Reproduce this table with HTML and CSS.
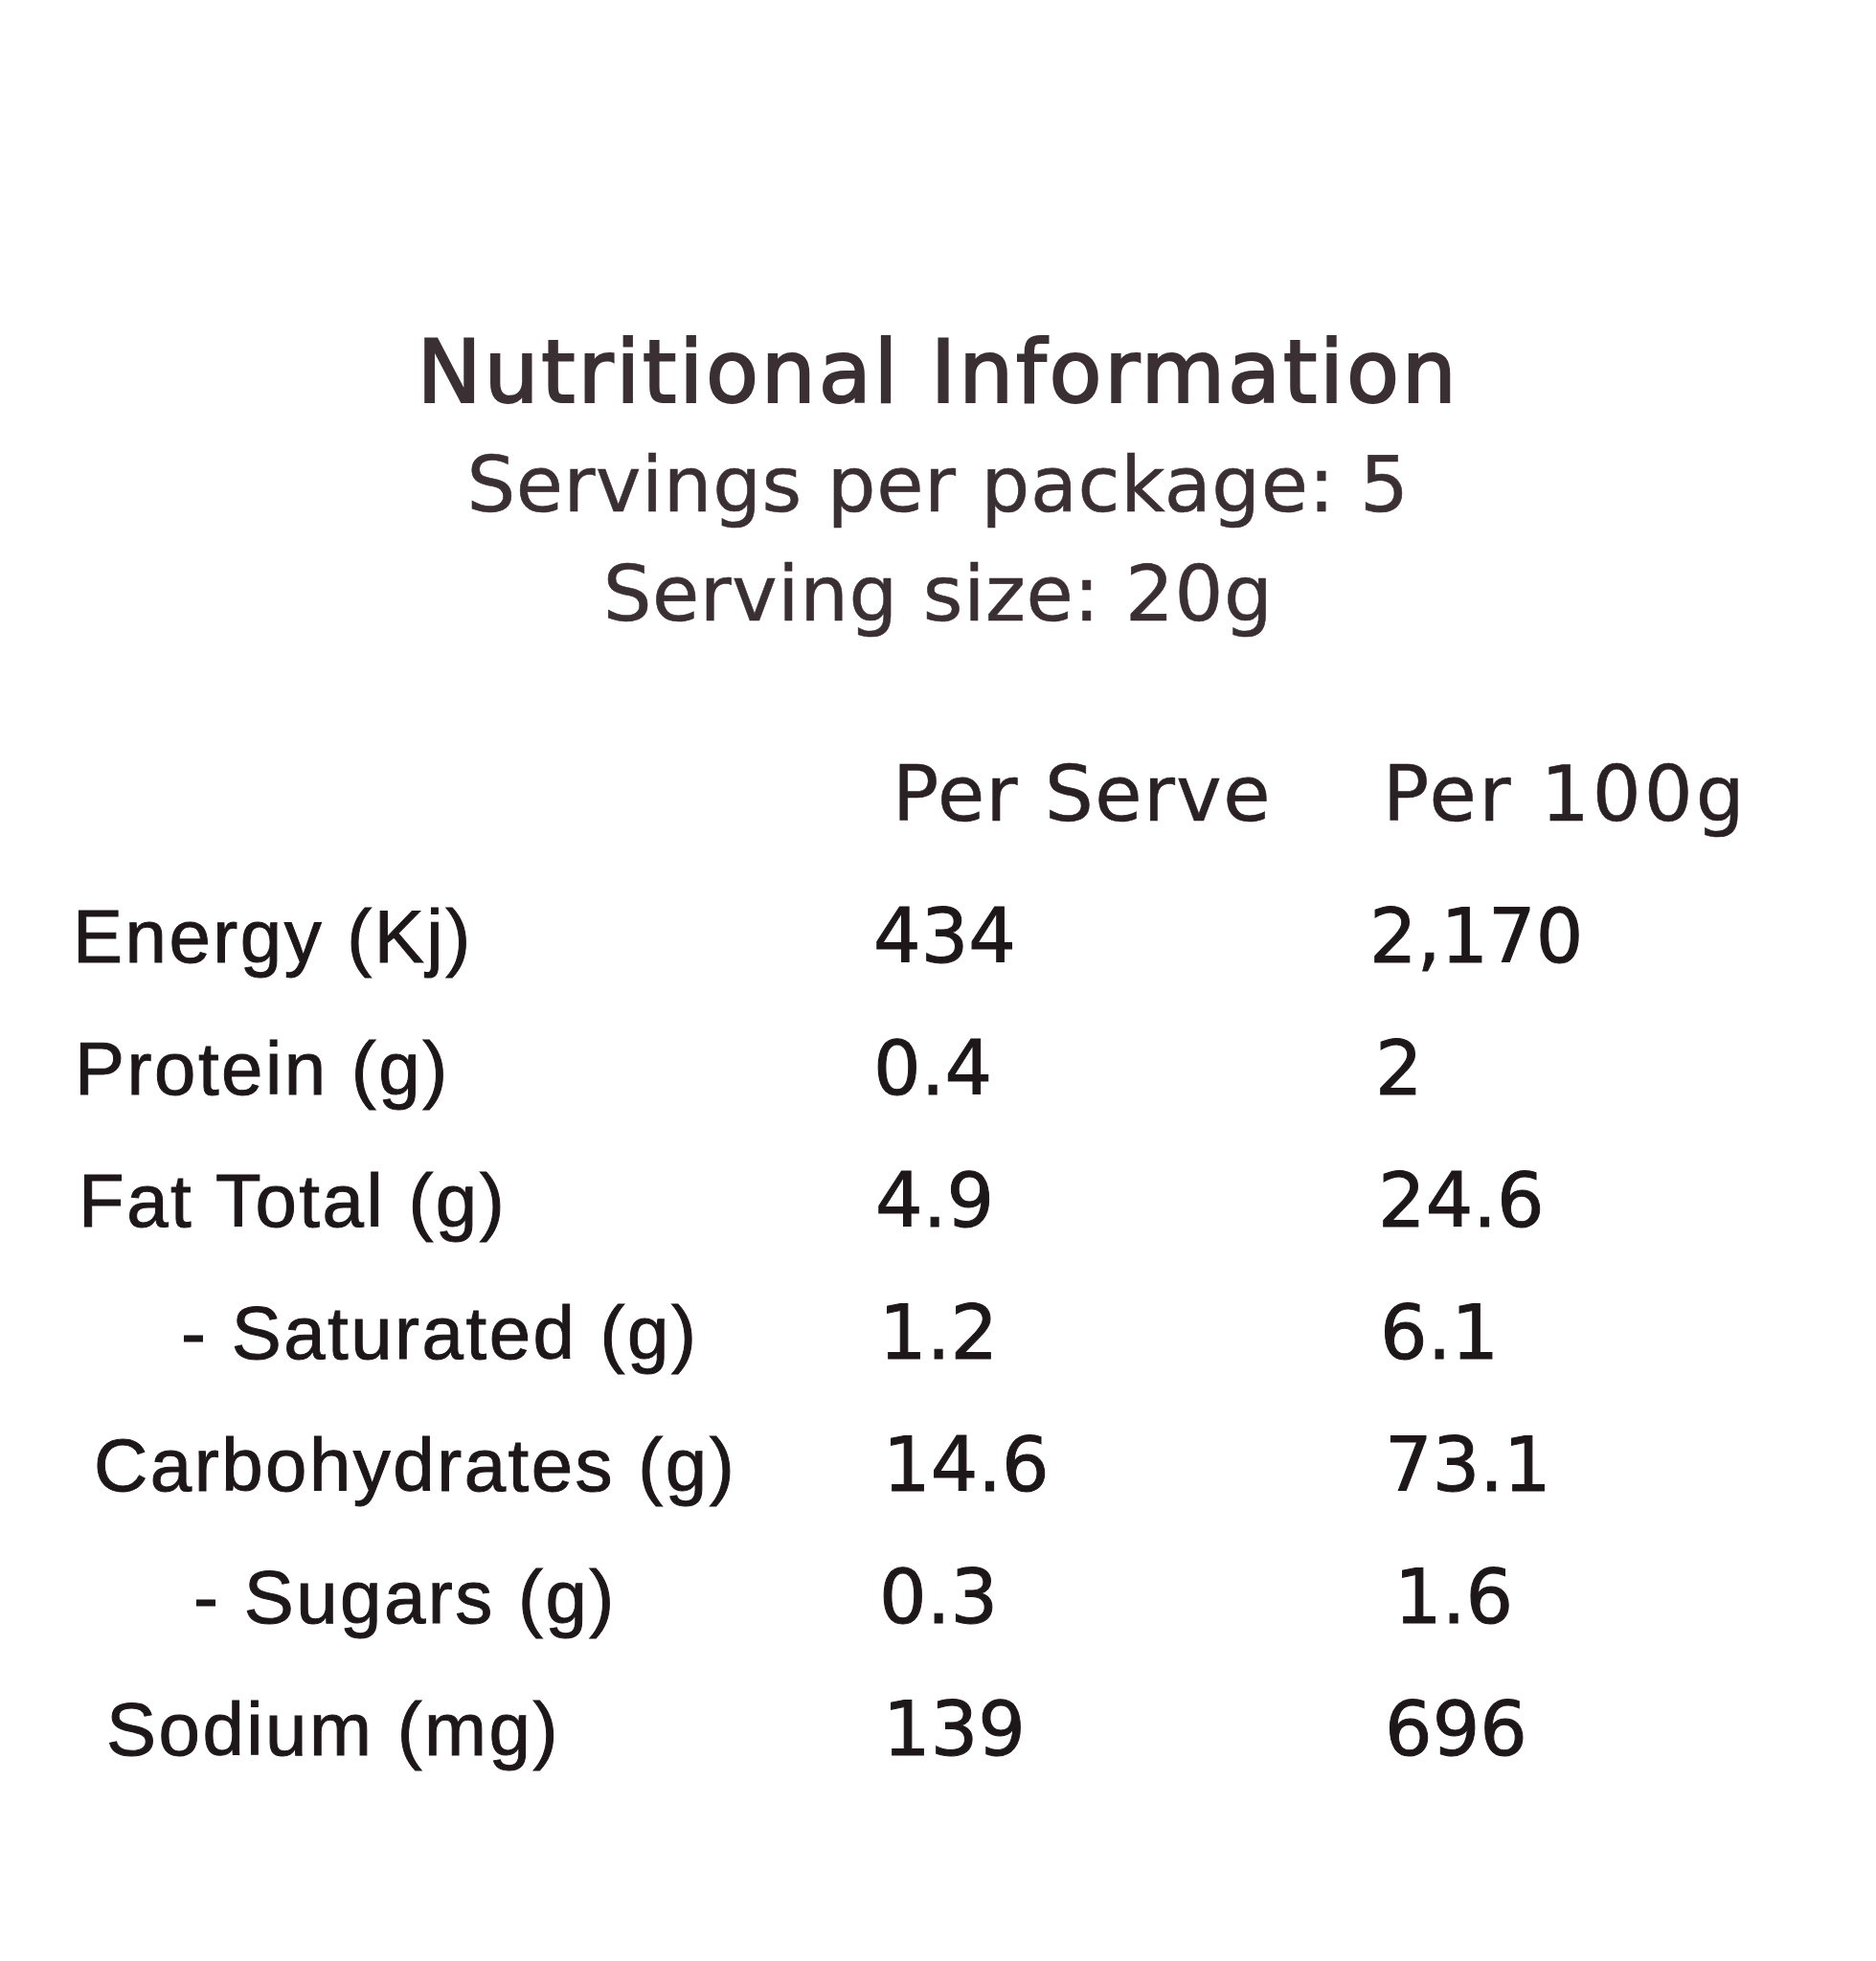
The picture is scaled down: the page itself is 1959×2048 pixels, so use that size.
FILE: index.html
```html
<!DOCTYPE html>
<html lang="en">
<head>
<meta charset="utf-8">
<title>Nutritional Information</title>
<link rel="stylesheet" href="styles.css">
</head>
<body>
<main class="panel">
  <header class="heading">
    <h1 class="title">Nutritional Information</h1>
    <p class="meta meta-first">Servings per package: 5</p>
    <p class="meta">Serving size: 20g</p>
  </header>
  <section class="facts">
    <div class="row head">
      <span class="name"></span>
      <span class="col col-serve">Per Serve</span>
      <span class="col col-100">Per 100g</span>
    </div>
    <div class="row">
      <span class="name">Energy (Kj)</span>
      <span class="val">434</span>
      <span class="val">2,170</span>
    </div>
    <div class="row">
      <span class="name">Protein (g)</span>
      <span class="val">0.4</span>
      <span class="val">2</span>
    </div>
    <div class="row">
      <span class="name">Fat Total (g)</span>
      <span class="val">4.9</span>
      <span class="val">24.6</span>
    </div>
    <div class="row sub">
      <span class="name">- Saturated (g)</span>
      <span class="val">1.2</span>
      <span class="val">6.1</span>
    </div>
    <div class="row">
      <span class="name">Carbohydrates (g)</span>
      <span class="val">14.6</span>
      <span class="val">73.1</span>
    </div>
    <div class="row sub">
      <span class="name">- Sugars (g)</span>
      <span class="val">0.3</span>
      <span class="val">1.6</span>
    </div>
    <div class="row">
      <span class="name">Sodium (mg)</span>
      <span class="val">139</span>
      <span class="val">696</span>
    </div>
  </section>
</main>
</body>
</html>
```

FILE: styles.css
```css
html, body {
  margin: 0;
  padding: 0;
  background: #ffffff;
}

.panel {
  width: 1959px;
  min-height: 2048px;
  display: flex;
  flex-direction: column;
  font-family: "DejaVu Sans", "Liberation Sans", sans-serif;
}

.heading {
  padding-top: 336px;
  display: flex;
  flex-direction: column;
  align-items: center;
  color: #3a3033;
}

.title {
  margin: 0;
  font-size: 90px;
  line-height: 106px;
  font-weight: normal;
  letter-spacing: 2.8px;
  -webkit-text-stroke: 2.2px #3a3033;
}

.meta {
  margin: 0;
  font-size: 80px;
  line-height: 114px;
  letter-spacing: 0.6px;
  -webkit-text-stroke: 0.6px #3a3033;
}

.meta-first {
  margin-top: 8px;
}

.facts {
  margin-top: 83px;
  display: flex;
  flex-direction: column;
  color: #1d1719;
}

.row {
  display: grid;
  grid-template-columns: 836px 518px 1fr;
  padding-left: 76px;
  height: 138px;
  line-height: 138px;
  font-size: 78px;
  white-space: nowrap;
  -webkit-text-stroke: 1px #1d1719;
}

.row.head {
  margin-bottom: 10px;
  font-size: 80px;
  color: #2a2124;
  -webkit-text-stroke: 0.6px #2a2124;
}

.col-serve {
  padding-left: 20px;
  letter-spacing: 1.5px;
}

.col-100 {
  padding-left: 14px;
  letter-spacing: 3px;
}

.name {
  font-family: "Liberation Sans", Arial, sans-serif;
  letter-spacing: 2.5px;
}

.val {
  letter-spacing: 0;
}

/* slight drift of the printed columns */
.row:nth-child(3) .name { padding-left: 2px; }
.row:nth-child(4) .name { padding-left: 6px; }
.row:nth-child(5) .name { padding-left: 113px; }
.row:nth-child(6) .name { padding-left: 22px; }
.row:nth-child(7) .name { padding-left: 126px; }
.row:nth-child(8) .name { padding-left: 35px; }

.row:nth-child(4) .val:nth-child(2) { padding-left: 2px; }
.row:nth-child(5) .val:nth-child(2) { padding-left: 6px; }
.row:nth-child(6) .val:nth-child(2) { padding-left: 10px; }
.row:nth-child(7) .val:nth-child(2) { padding-left: 6px; }
.row:nth-child(8) .val:nth-child(2) { padding-left: 10px; }

.row:nth-child(3) .val:nth-child(3) { padding-left: 6px; }
.row:nth-child(4) .val:nth-child(3) { padding-left: 9px; }
.row:nth-child(5) .val:nth-child(3) { padding-left: 11px; }
.row:nth-child(6) .val:nth-child(3) { padding-left: 16px; }
.row:nth-child(7) .val:nth-child(3) { padding-left: 26px; }
.row:nth-child(8) .val:nth-child(3) { padding-left: 16px; }
```
